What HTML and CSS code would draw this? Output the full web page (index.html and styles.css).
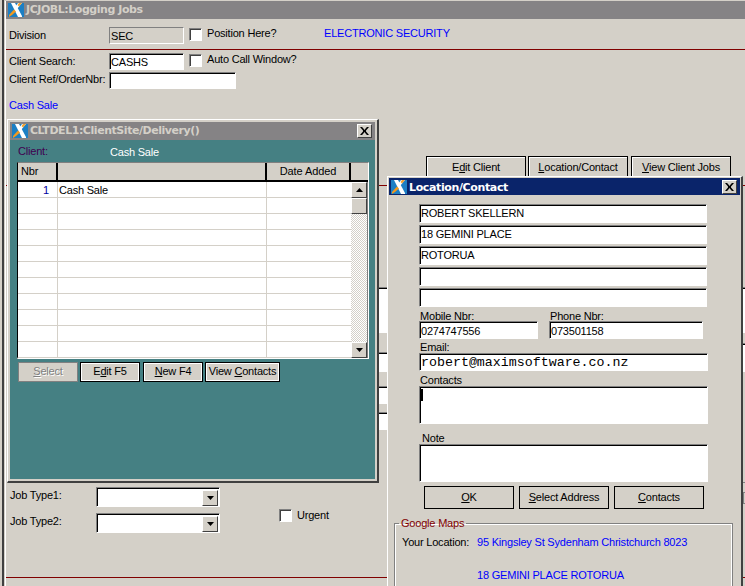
FILE: index.html
```html
<!DOCTYPE html>
<html lang="en">
<head>
<meta charset="utf-8">
<title>JCJOBL:Logging Jobs</title>
<link rel="stylesheet" href="styles.css">
</head>
<body>
<svg class="defs" width="0" height="0" aria-hidden="true">
  <symbol id="xlogo" viewBox="0 0 16 14">
    <rect width="16" height="14" fill="#1c7fc4"/>
    <polygon points="3,0 7,0 14,13 14,14 10,14" fill="#fff"/>
    <polygon points="10,0 14,0 9,6 7,4" fill="#fff"/>
    <polygon points="11,0 14,0 11,3.5 9.5,2" fill="#f0a030"/>
    <polygon points="6,6.5 8,8.5 4,12 1,14 1,12" fill="#f59a1c"/>
  </symbol>
  <symbol id="closex" viewBox="0 0 9 8">
    <path d="M0 0h2l1 1h3l1-1h2L6 3.5v1L9 8H7L6 7H3L2 8H0l3-3.500v-1z" fill="#000"/>
    <path d="M3 1l1.500 2L6 1zM3 7l1.500-2L6 7z" fill="#d4d0c8"/>
  </symbol>
  <symbol id="arrdown" viewBox="0 0 7 4"><path d="M0 0h7L3.500 4z" fill="#000"/></symbol>
  <symbol id="arrup" viewBox="0 0 7 4"><path d="M0 4h7L3.500 0z" fill="#000"/></symbol>
</svg>

<div class="desk">
  <!-- Main window -->
  <div class="main">
    <div class="main-inner">
      <div class="title title-off">
        <svg class="logo"><use href="#xlogo"/></svg>
        <span class="title-text">JCJOBL:Logging Jobs</span>
      </div>

      <div class="row row-division">
        <span class="lbl">Division</span>
        <div class="field field-ro w75">SEC</div>
        <span class="check"></span>
        <span class="check-text">Position Here?</span>
        <span class="blue division-name">ELECTRONIC SECURITY</span>
      </div>
      <div class="rule rule-a"></div>
      <div class="row row-search">
        <span class="lbl">Client Search:</span>
        <div class="field w75">CASHS</div>
        <span class="check"></span>
        <span class="check-text">Auto Call Window?</span>
      </div>
      <div class="row row-ref">
        <span class="lbl">Client Ref/OrderNbr:</span>
        <div class="field w127"></div>
      </div>
      <div class="blue client-name">Cash Sale</div>

      <div class="tabs">
        <div class="tab">E<u>d</u>it Client</div>
        <div class="tab"><u>L</u>ocation/Contact</div>
        <div class="tab tab-last"><u>V</u>iew Client Jobs</div>
      </div>
      <div class="rule rule-b"></div>

      <div class="lower">
        <div class="col-jobs">
          <div class="jobs">
            <div class="job-rows">
              <div class="job-row">
                <span class="job-lbl">Job Type1:</span>
                <div class="field combo"><span class="drop"><svg class="arrow"><use href="#arrdown"/></svg></span></div>
              </div>
              <div class="job-row">
                <span class="job-lbl">Job Type2:</span>
                <div class="field combo"><span class="drop"><svg class="arrow"><use href="#arrdown"/></svg></span></div>
              </div>
            </div>
            <div class="urgent">
              <span class="check"></span>
              <span class="urgent-text">Urgent</span>
            </div>
          </div>
        </div>
        <div class="col-frag">
          <div class="frag f1"></div>
          <div class="frag f2"></div>
          <div class="frag f3"></div>
          <div class="frag f4"></div>
        </div>
        <div class="col-gap"></div>
        <div class="col-frag">
          <div class="frag f1"></div>
          <div class="frag f5"></div>
          <div class="frag-line"></div>
          <div class="frag-mini"></div>
        </div>
      </div>
      <div class="rule"></div>
    </div>
  </div>

  <!-- Client site child window -->
  <div class="child">
    <div class="title title-off child-title">
      <svg class="logo logo-child"><use href="#xlogo"/></svg>
      <span class="title-text">CLTDEL1:ClientSite/Delivery()</span>
      <span class="close"><svg class="close-x"><use href="#closex"/></svg></span>
    </div>
    <div class="child-body">
      <div class="client-row">
        <span class="client-lbl">Client:</span>
        <span class="client-val">Cash Sale</span>
      </div>
      <div class="grid">
        <div class="ghead">
          <div class="gh c1">Nbr</div>
          <div class="gh c2"></div>
          <div class="gh c3">Date Added</div>
          <div class="gh c4"></div>
        </div>
        <div class="gbody">
          <div class="grows">
            <div class="grow"><div class="gc c1 num">1</div><div class="gc c2">Cash Sale</div><div class="gc c3"></div></div>
            <div class="grow"><div class="gc c1"></div><div class="gc c2"></div><div class="gc c3"></div></div>
            <div class="grow"><div class="gc c1"></div><div class="gc c2"></div><div class="gc c3"></div></div>
            <div class="grow"><div class="gc c1"></div><div class="gc c2"></div><div class="gc c3"></div></div>
            <div class="grow"><div class="gc c1"></div><div class="gc c2"></div><div class="gc c3"></div></div>
            <div class="grow"><div class="gc c1"></div><div class="gc c2"></div><div class="gc c3"></div></div>
            <div class="grow"><div class="gc c1"></div><div class="gc c2"></div><div class="gc c3"></div></div>
            <div class="grow"><div class="gc c1"></div><div class="gc c2"></div><div class="gc c3"></div></div>
            <div class="grow"><div class="gc c1"></div><div class="gc c2"></div><div class="gc c3"></div></div>
            <div class="grow"><div class="gc c1"></div><div class="gc c2"></div><div class="gc c3"></div></div>
            <div class="grow"><div class="gc c1"></div><div class="gc c2"></div><div class="gc c3"></div></div>
          </div>
          <div class="scroll">
            <span class="sbtn"><svg class="arrow"><use href="#arrup"/></svg></span>
            <span class="sthumb"></span>
            <span class="strack"></span>
            <span class="sbtn"><svg class="arrow"><use href="#arrdown"/></svg></span>
          </div>
        </div>
      </div>
      <div class="child-btns">
        <div class="btn btn-off w60"><u>S</u>elect</div>
        <div class="btn w60">E<u>d</u>it F5</div>
        <div class="btn w60 btn-new"><u>N</u>ew F4</div>
        <div class="btn w75b">View <u>C</u>ontacts</div>
      </div>
    </div>
  </div>

  <!-- Location / contact dialog -->
  <div class="dialog">
    <div class="title title-on">
      <svg class="logo logo-dialog"><use href="#xlogo"/></svg>
      <span class="title-text">Location/Contact</span>
      <span class="close close-dialog"><svg class="close-x"><use href="#closex"/></svg></span>
    </div>
    <div class="dialog-body">
      <div class="addr">
        <div class="field addr-line">ROBERT SKELLERN</div>
        <div class="field addr-line">18 GEMINI PLACE</div>
        <div class="field addr-line">ROTORUA</div>
        <div class="field addr-line"></div>
        <div class="field addr-line"></div>
      </div>
      <div class="phones">
        <div class="phone-col">
          <div class="small-lbl">Mobile Nbr:</div>
          <div class="field phone-m">0274747556</div>
        </div>
        <div class="phone-col">
          <div class="small-lbl">Phone Nbr:</div>
          <div class="field phone-p">073501158</div>
        </div>
      </div>
      <div class="small-lbl email-lbl">Email:</div>
      <div class="field email">robert@maximsoftware.co.nz</div>
      <div class="small-lbl contacts-lbl">Contacts</div>
      <div class="field memo"><span class="caret"></span></div>
      <div class="small-lbl note-lbl">Note</div>
      <div class="field memo"></div>
      <div class="dlg-btns">
        <div class="btn dlg-btn"><u>O</u>K</div>
        <div class="btn dlg-btn"><u>S</u>elect Address</div>
        <div class="btn dlg-btn"><u>C</u>ontacts</div>
      </div>
      <fieldset class="maps">
        <legend class="maps-legend">Google Maps</legend>
        <div class="loc-row">
          <span class="loc-lbl">Your Location:</span>
          <span class="blue">95 Kingsley St Sydenham Christchurch 8023</span>
        </div>
        <div class="blue loc-dest">18 GEMINI PLACE ROTORUA</div>
      </fieldset>
    </div>
  </div>
</div>
</body>
</html>
```

FILE: styles.css
```css
* { box-sizing: border-box; }
html, body { margin: 0; padding: 0; background: #d4d0c8; }
body { font: 11px/14px "Liberation Sans", Arial, sans-serif; letter-spacing: -.2px; color: #000; }
.defs { position: absolute; }
u { text-decoration: underline; }

.desk { position: relative; width: 745px; height: 586px; overflow: hidden; background: #d4d0c8; }

/* windows */
.main { position: absolute; inset: 0 0 0 2px; border-left: 2px solid #404040; padding: 1px 0 0 1px; }
.main-inner { border-left: 1px solid #fff; height: 100%; }

.title { display: flex; align-items: center; height: 18px; font: bold 11px/18px "DejaVu Sans", Verdana, sans-serif; letter-spacing: -.45px; }
.title-off { background: #858385; color: #d4d0c8; }
.title-on { background: #0a246a; color: #fff; height: 17px; letter-spacing: -.37px; }
.title-on .title-text { position: relative; top: 1px; }
.logo { width: 16px; height: 14px; margin-left: 2px; flex: none; }
.title-text { margin-left: 2px; white-space: nowrap; }

.close { margin-left: auto; margin-right: 3px; width: 15px; height: 14px; background: #d4d0c8; display: flex; align-items: center; justify-content: center;
  border: 1px solid; border-color: #fff #404040 #404040 #fff; }
.close-x { width: 9px; height: 8px; display: block; }

/* form rows */
.row { display: flex; align-items: center; height: 17px; padding-left: 3px; }
.lbl { width: 100px; flex: none; white-space: nowrap; position: relative; top: -1px; }
.row-division { margin-top: 8px; }
.row-search { margin-top: 3px; }
.row-ref { margin-top: 2px; }
.row-ref .lbl { top: -2px; }
.rule { height: 1px; background: #800000; }
.rule-a { margin-top: 5px; }
.rule-b { margin-top: 7px; }

.field { background: #fff; border: 1px solid; border-color: #808080 #fff #fff #808080; box-shadow: inset 1px 1px 0 #000; padding: 1px 0 0 1px; line-height: 14px; white-space: nowrap; flex: none; }
.field-ro { background: #d4d0c8; box-shadow: none; }
.w75 { width: 75px; height: 17px; }
.w127 { width: 127px; height: 17px; }
.check { width: 13px; height: 13px; flex: none; background: #fff; border: 1px solid; border-color: #808080 #fff #fff #808080; box-shadow: inset 1px 1px 0 #404040; }
.row .check { margin: 0 0 2px 5px; }
.check-text { margin-left: 5px; white-space: nowrap; position: relative; top: -3px; }
.blue { color: #0000ff; white-space: nowrap; }
.division-name { position: relative; top: -3px; }
.row-division .check-text { width: 103px; flex: none; }
.row-division .division-name { margin-left: 14px; }
.client-name { margin: 9px 0 0 3px; height: 14px; }

/* tabs */
.tabs { display: flex; gap: 2px; margin: 44px 0 0 420px; height: 22px; }
.tab { width: 100px; height: 22px; border: 1px solid #000; border-bottom: 0; box-shadow: inset 1px 1px 0 #fff; text-align: center; line-height: 20px; white-space: nowrap; }
.tab-last { margin-left: 1px; }

/* lower hidden area */
.lower { display: grid; grid-template-columns: 372px 9px 356px 2px; height: 391px; }
.col-jobs { padding: 301px 0 0 4px; }
.jobs { display: flex; }
.job-rows { display: flex; flex-direction: column; gap: 6px; width: 216px; }
.job-row { display: flex; align-items: center; height: 20px; }
.job-lbl { width: 86px; flex: none; position: relative; top: -2px; }
.combo { width: 124px; height: 20px; padding: 0; display: flex; justify-content: flex-end; align-items: center; }
.drop { width: 16px; height: 16px; margin-right: 1px; margin-top: 1px; background: #d4d0c8; border: 1px solid; border-color: #fff #404040 #404040 #fff; display: flex; align-items: center; justify-content: center; }
.arrow { width: 7px; height: 4px; display: block; }
.urgent { display: flex; align-items: center; margin: 21px 0 0 53px; height: 14px; }
.urgent-text { margin-left: 5px; }

.frag { background: #fff; border-top: 1px solid #000; box-shadow: 0 -1px 0 #808080; border-bottom: 1px solid #d4d0c8; }
.f1 { margin-top: 102px; height: 46px; }
.f2 { margin-top: 19px; height: 20px; }
.f3 { margin-top: 14px; height: 18px; }
.f4 { margin-top: 8px; height: 18px; }
.f5 { margin-top: 10px; height: 29px; }
.frag-line { margin-top: 109px; height: 1px; background: #808080; }
.frag-mini { margin-top: 9px; height: 12px; border: 1px solid #808080; border-right: 0; }

/* child window */
.child { position: absolute; left: 7px; top: 119px; width: 372px; height: 364px; background: #d4d0c8; padding: 2px; border: 1px solid; border-color: #fff #404040 #404040 #fff; border-width: 1px 2px 2px 1px; }
.child-body { background: #458083; height: 339px; padding: 4px 0 0 7px; }
.client-row { display: flex; height: 14px; }
.client-lbl { width: 92px; color: #400050; margin-left: 1px; }
.client-val { color: #fff; line-height: 16px; }

.grid { margin-top: 4px; width: 352px; height: 197px; background: #fff; border: 1px solid; border-color: #808080 #fff #fff #000; border-width: 1px 1px 2px 1px; }
.ghead { display: flex; height: 19px; border-bottom: 2px solid #000; background: #d4d0c8; }
.gh { height: 17px; line-height: 16px; text-align: center; border-right: 2px solid #000; letter-spacing: -.1px; }
.gh.c1 { text-align: left; padding-left: 3px; }
.c1 { width: 40px; flex: none; }
.c2 { width: 209px; flex: none; }
.c3 { width: 84px; flex: none; }
.gh.c4 { flex: 1; border-right: 0; }
.gbody { display: flex; height: 175px; }
.grows { width: 333px; flex: none; }
.grow { display: flex; height: 16px; border-bottom: 1px solid #d4d0c8; }
.gc { border-right: 1px solid #d4d0c8; height: 15px; line-height: 16px; padding-left: 1px; }
.gc.c3 { border-right: 0; }
.num { color: #0000a0; text-align: right; padding: 0 8px 0 0; }

.scroll { width: 16px; height: 176px; display: flex; flex-direction: column; box-shadow: 1px 0 0 #808080; }
.sbtn, .sthumb { height: 16px; flex: none; display: flex; align-items: center; justify-content: center; background: #d4d0c8; border: 1px solid; border-color: #fff #404040 #404040 #fff; }
.strack { flex: 1; background: repeating-conic-gradient(#d4d0c8 0 25%, #fff 0 50%) 0 0 / 2px 2px; }

.child-btns { display: flex; gap: 2px; margin: 3px 0 0 1px; }
.btn { height: 20px; border: 1px solid #000; background: #d4d0c8; text-align: center; line-height: 17px; white-space: nowrap; flex: none; }
.child-btns .btn { box-shadow: 0 0 0 1px #fff inset; }
.btn-off { color: #808080; border-color: #808080; text-shadow: 1px 1px 0 #fff; }
.child-btns .btn-off { box-shadow: none; }
.btn-new { margin-left: 1px; }
.w60 { width: 60px; }
.w75b { width: 75px; }

/* dialog */
.dialog { position: absolute; left: 387px; top: 176px; width: 356px; height: 420px; background: #d4d0c8; border: 1px solid; border-color: #fff #404040 #404040 #fff; border-width: 1px 2px 1px 1px; padding: 1px; }
.dialog-body { padding: 9px 0 0 30px; }
.addr { display: flex; flex-direction: column; gap: 2px; }
.addr-line { width: 288px; height: 19px; }
.phones { display: flex; gap: 11px; margin-top: 2px; }
.small-lbl { height: 12px; line-height: 12px; padding-left: 1px; white-space: nowrap; }
.phone-col .small-lbl { line-height: 14px; }
.phone-m { width: 119px; height: 18px; padding-top: 2px; }
.phone-p { width: 154px; height: 18px; padding-top: 2px; }
.email-lbl { margin-top: 2px; }
.email { width: 289px; height: 18px; font: 13.3px/15px "Liberation Mono", "Courier New", monospace; letter-spacing: 0; }
.contacts-lbl { margin-top: 3px; }
.memo { width: 289px; height: 38px; position: relative; }
.caret { position: absolute; left: 1px; top: 2px; width: 2px; height: 12px; background: #000; }
.note-lbl { margin-top: 8px; padding-left: 3px; }
.dlg-btns { display: flex; gap: 5px; margin: 4px 0 0 5px; }
.dlg-btn { width: 90px; height: 23px; line-height: 20px; }

.maps { margin: 7px 0 0 -25px; width: 339px; height: 120px; padding: 0 0 0 7px; border: 1px solid #808080; box-shadow: 0 0 0 1px #fff inset; }
.maps-legend { color: #800000; padding: 0 2px; margin-left: -3px; line-height: 14px; }
.loc-row { display: flex; margin-top: 5px; height: 14px; white-space: nowrap; }
.loc-lbl { width: 75px; flex: none; }
.loc-dest { margin: 19px 0 0 75px; }
```
